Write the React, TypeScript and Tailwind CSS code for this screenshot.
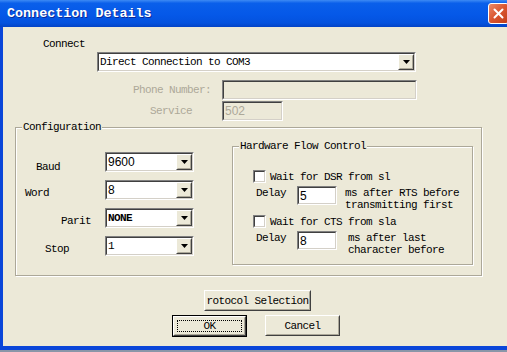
import React from "react";

const mono = "font-['Liberation_Mono',monospace] text-[11px] leading-[12px] tracking-[-0.6px] text-black";
const sans = "font-['Liberation_Sans',Arial,sans-serif] text-[12px] leading-[14px]";

type Box = { className?: string; innerClass?: string; children?: React.ReactNode };

function Sunken({ className = "", innerClass = "", children }: Box) {
  return (
    <div className={`border border-t-[#808080] border-l-[#808080] border-r-white border-b-white ${className}`}>
      <div className={`h-full w-full border border-t-[#404040] border-l-[#404040] border-r-[#d4d0c8] border-b-[#d4d0c8] ${innerClass}`}>
        {children}
      </div>
    </div>
  );
}

function Raised({ className = "", innerClass = "", children }: Box) {
  return (
    <div className={`border border-t-white border-l-white border-r-[#404040] border-b-[#404040] ${className}`}>
      <div className={`h-full w-full border border-t-[#ece9d8] border-l-[#ece9d8] border-r-[#aca899] border-b-[#aca899] bg-[#ece9d8] ${innerClass}`}>
        {children}
      </div>
    </div>
  );
}

function Combo({ className = "", textClass = "", text }: { className?: string; textClass?: string; text: string }) {
  return (
    <Sunken className={className} innerClass="bg-white flex items-stretch">
      <div className={`flex-1 flex items-center pl-[1px] ${textClass}`}>{text}</div>
      <Raised className="w-[16px] shrink-0" innerClass="flex items-center justify-center">
        <svg width="7" height="4" viewBox="0 0 7 4">
          <path d="M0 0h7L3.5 4z" fill="black" />
        </svg>
      </Raised>
    </Sunken>
  );
}

function Check() {
  return <Sunken className="w-[13px] h-[13px] shrink-0" innerClass="bg-white" />;
}

function ConfigRow({ label, labelClass, text, textClass }: { label: string; labelClass: string; text: string; textClass: string }) {
  return (
    <div className="flex items-center h-[20px]">
      <div className="w-[89px]">
        <span className={`${mono} ${labelClass}`}>{label}</span>
      </div>
      <Combo className="w-[89px] h-[20px]" text={text} textClass={textClass} />
    </div>
  );
}

export default function App() {
  return (
    <div className="w-[507px] h-[352px] overflow-hidden flex flex-col bg-[#0a46d9]">
      {/* title bar */}
      <div className="h-[27px] shrink-0 flex items-center justify-between pl-[7px] bg-[linear-gradient(180deg,#3d8af4_0%,#0a5fea_12%,#0558e8_55%,#0452de_85%,#0343c6_100%)]">
        <span className="font-['Liberation_Mono',monospace] font-bold text-[13.4px] leading-[16px] text-white [text-shadow:1px_1px_0_#0b2a9a]">
          Connection Details
        </span>
        <div className="w-[21px] h-[21px] mr-[-2px] rounded-[3px] border border-white bg-[linear-gradient(135deg,#eb8a6a_0%,#d9552f_50%,#c23d18_100%)] flex items-center justify-center">
          <svg width="11" height="11" viewBox="0 0 11 11">
            <path d="M1.5 1.5l8 8M9.5 1.5l-8 8" stroke="white" strokeWidth="2" strokeLinecap="round" />
          </svg>
        </div>
      </div>

      <div className="flex-1 flex min-h-0">
        <div className="w-[3px] shrink-0 bg-[#0a46d9]" />
        <div className="flex-1 bg-[#ece9d8] flex flex-col items-start">
          <span className={`${mono} ml-[40px] mt-[11px]`}>Connect</span>
          <Combo className="ml-[94px] mt-[2px] w-[319px] h-[20px]" text="Direct Connection to COM3" textClass={mono} />

          <div className="mt-[8px] flex items-center">
            <span className={`${mono} ml-[130px] w-[89px] !text-[#aca899]`}>Phone Number:</span>
            <Sunken className="w-[195px] h-[20px]" innerClass="bg-[#ece9d8]" />
          </div>
          <div className="mt-[1px] flex items-center">
            <span className={`${mono} ml-[147px] w-[72px] !text-[#aca899]`}>Service</span>
            <Sunken className="w-[61px] h-[20px]" innerClass="bg-[#ece9d8] flex items-center pl-[1px]">
              <span className={`${sans} text-[#aca899]`}>502</span>
            </Sunken>
          </div>

          {/* Configuration group */}
          <fieldset className="ml-[12px] w-[467px] border border-[#aca899] shadow-[inset_1px_1px_0_white,1px_1px_0_white] pb-[10px]">
            <legend className={`${mono} ml-[6px] px-[1px] bg-[#ece9d8]`}>Configuration</legend>
            <div className="flex items-start">
              <div className="mt-[19px] w-[178px] flex flex-col gap-[8px]">
                <ConfigRow label="Baud" labelClass="ml-[20px] relative top-[2px]" text="9600" textClass={`${sans} text-black`} />
                <ConfigRow label="Word" labelClass="ml-[9px]" text="8" textClass={`${sans} text-black`} />
                <ConfigRow label="Parit" labelClass="ml-[45px]" text="NONE" textClass={`${mono} font-bold`} />
                <ConfigRow label="Stop" labelClass="ml-[29px]" text="1" textClass={mono} />
              </div>

              {/* Hardware Flow Control */}
              <fieldset className="ml-[38px] mt-[7px] w-[241px] border border-[#aca899] shadow-[inset_1px_1px_0_white,1px_1px_0_white] pb-[8px]">
                <legend className={`${mono} ml-[6px] px-[1px] bg-[#ece9d8]`}>Hardware Flow Control</legend>
                <div className="mt-[18px] ml-[20px] flex items-center gap-[4px]">
                  <Check />
                  <span className={mono}>Wait for DSR from sl</span>
                </div>
                <div className="mt-[3px] ml-[23px] flex items-start">
                  <span className={`${mono} mt-[1px] w-[41px]`}>Delay</span>
                  <Sunken className="w-[40px] h-[19px]" innerClass="bg-white flex items-center pl-[1px]">
                    <span className={`${sans} text-black`}>5</span>
                  </Sunken>
                  <div className={`${mono} ml-[8px] mt-[1px] flex flex-col`}>
                    <span>ms after RTS before</span>
                    <span>transmitting first</span>
                  </div>
                </div>
                <div className="mt-[4px] ml-[20px] flex items-center gap-[4px]">
                  <Check />
                  <span className={mono}>Wait for CTS from sla</span>
                </div>
                <div className="mt-[3px] ml-[23px] flex items-start">
                  <span className={`${mono} mt-[1px] w-[41px]`}>Delay</span>
                  <Sunken className="w-[40px] h-[19px]" innerClass="bg-white flex items-center pl-[1px]">
                    <span className={`${sans} text-black`}>8</span>
                  </Sunken>
                  <div className={`${mono} ml-[11px] mt-[1px] flex flex-col`}>
                    <span>ms after last</span>
                    <span>character before</span>
                  </div>
                </div>
              </fieldset>
            </div>
          </fieldset>

          <Raised className="ml-[201px] mt-[14px] w-[107px] h-[21px]" innerClass="flex items-center justify-center">
            <span className={mono}>rotocol Selection</span>
          </Raised>

          <div className="mt-[4px] ml-[169px] flex gap-[18px]">
            <div className="w-[75px] h-[22px] border border-black">
              <Raised className="h-full" innerClass="p-[2px]">
                <div className="h-full border border-dotted border-black flex items-center justify-center">
                  <span className={mono}>OK</span>
                </div>
              </Raised>
            </div>
            <Raised className="w-[75px] h-[21px]" innerClass="flex items-center justify-center">
              <span className={mono}>Cancel</span>
            </Raised>
          </div>
        </div>
      </div>
      <div className="h-[4px] shrink-0 bg-[#0a46d9]" />
      <div className="h-[2px] shrink-0 bg-[#8a96a8]" />
    </div>
  );
}
